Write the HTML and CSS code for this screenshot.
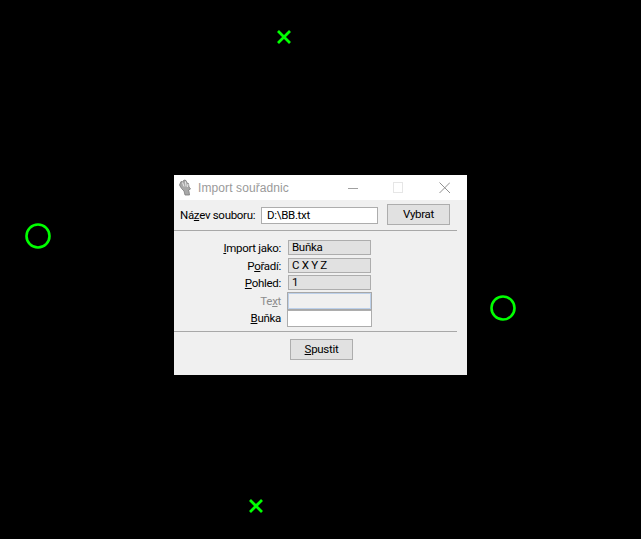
FILE: index.html
```html
<!DOCTYPE html>
<html lang="cs">
<head>
<meta charset="utf-8">
<title>Import souřadnic</title>
<link rel="stylesheet" href="styles.css">
</head>
<body>
<svg class="marks" width="641" height="539" viewBox="0 0 641 539" aria-hidden="true">
  <g class="mark">
    <path d="M278 31l12 12M290 31l-12 12"/>
    <path d="M250 500l12 12M262 500l-12 12"/>
    <circle cx="38" cy="236" r="11.500"/>
    <circle cx="503" cy="308" r="11.500"/>
  </g>
</svg>
<main class="window">
  <header class="titlebar">
    <svg class="appicon" width="14" height="17" viewBox="0 0 14 17" aria-hidden="true">
      <path d="M1.500 6L3 2.500l1.500.5L6 1l2 .5 1 2.500 1.500.5.500 3.500L12.500 10l-2 1 .5 1.500.5 3.500H7l-1-4-2.500-2.500z" fill="#a8a8a8" stroke="#7c7c7c" stroke-width=".8"/>
      <path d="M4.500 3.500l1.500 4M7.500 2.500l.5 5M10 5l-.5 3" stroke="#ececec" fill="none"/>
    </svg>
    <span class="title">Import souřadnic</span>
    <span class="caption">
      <svg width="11" height="12" viewBox="0 0 11 12" class="minimize"><path d="M1 6.500h10"/></svg>
      <svg width="11" height="12" viewBox="0 0 11 12" class="maximize"><rect x=".5" y=".5" width="9" height="10"/></svg>
      <svg width="11" height="12" viewBox="0 0 11 12" class="close"><path d="M.5.500l10.500 10.500M11 .500L.5 11"/></svg>
    </span>
  </header>
  <section class="filerow">
    <label class="filelabel">Ná<u>z</u>ev souboru:</label>
    <div class="field file">D:\BB.txt</div>
    <button class="btn">Vybrat</button>
  </section>
  <hr class="sep first">
  <section class="form">
    <label><u>I</u>mport jako:</label><div class="field ro">Buňka</div>
    <label>P<u>o</u>řadí:</label><div class="field ro">C X Y Z</div>
    <label><u>P</u>ohled:</label><div class="field ro">1</div>
    <label class="dim">Te<u>x</u>t</label><div class="field disabled"></div>
    <label><u>B</u>uňka</label><div class="field edit"></div>
  </section>
  <hr class="sep second">
  <footer class="actions">
    <button class="btn"><u>S</u>pustit</button>
  </footer>
</main>
</body>
</html>
```
FILE: styles.css
```css
html, body { margin: 0; padding: 0; background: #000; }
body { width: 641px; height: 539px; overflow: hidden; position: relative; font-family: Roboto, "Liberation Sans", Arial, sans-serif; font-size: 11.5px; letter-spacing: -.3px; color: #000; }
.marks { position: absolute; left: 0; top: 0; }
.mark path, .mark circle { fill: none; stroke: #00ff00; }
.mark path { stroke-width: 2.8; }
.mark circle { stroke-width: 2.6; }
.window { position: absolute; left: 174px; top: 175px; width: 293px; height: 200px; background: #f0f0f0; box-sizing: border-box; }
.titlebar { height: 25px; background: #fff; display: flex; align-items: center; padding-left: 4px; }
.appicon { flex: none; }
.title { margin-left: 6px; font-family: "Liberation Sans", Arial, sans-serif; font-size: 12px; color: #9a9a9a; letter-spacing: .1px; }
.caption { margin-left: auto; display: flex; gap: 35px; padding-right: 17px; align-items: center; }
.caption svg { display: block; fill: none; stroke-width: 1; }
.minimize path { stroke: #a0a0a0; }
.maximize rect { stroke: #e6e6e6; }
.close path { stroke: #909090; }
.filerow { display: flex; align-items: flex-start; padding: 4px 0 0 6px; height: 25px; box-sizing: border-box; }
.filelabel { width: 81px; line-height: 22px; white-space: nowrap; }
.field { box-sizing: border-box; border: 1px solid #adadad; padding-left: 3px; white-space: nowrap; }
.file { width: 117px; height: 17px; margin-top: 3px; background: #fff; line-height: 15px; padding-left: 5px; }
.btn { box-sizing: border-box; width: 63px; height: 21px; background: #e1e1e1; border: 1px solid #adadad; padding: 0 0 2px; margin: 0; font: inherit; letter-spacing: inherit; color: #000; }
.filerow .btn { margin-left: 9px; }
.sep { margin: 0; border: 0; height: 1px; background: #a8a8a8; width: 283px; }
.first { margin-top: 5px; }
.form { display: grid; grid-template-columns: 113px 85px; grid-template-rows: 18px 17px 17px 18px 17px; margin-top: 9px; }
.form label { text-align: right; padding-right: 6px; white-space: nowrap; line-height: 17px; }
.form .dim { line-height: 18px; }
.ro { width: 83px; height: 15px; margin-left: 1px; background: #e1e1e1; line-height: 13px; }
.disabled { width: 85px; height: 18px; background: #f0f0f0; border: 1px solid #a8a8a8; box-shadow: inset 0 0 0 1px #bcd0ea; }
.edit { width: 85px; height: 17px; background: #fff; }
.dim { color: #8c8c8c; }
.second { margin-top: 4px; }
.actions { padding: 7px 0 0 116px; }
```
